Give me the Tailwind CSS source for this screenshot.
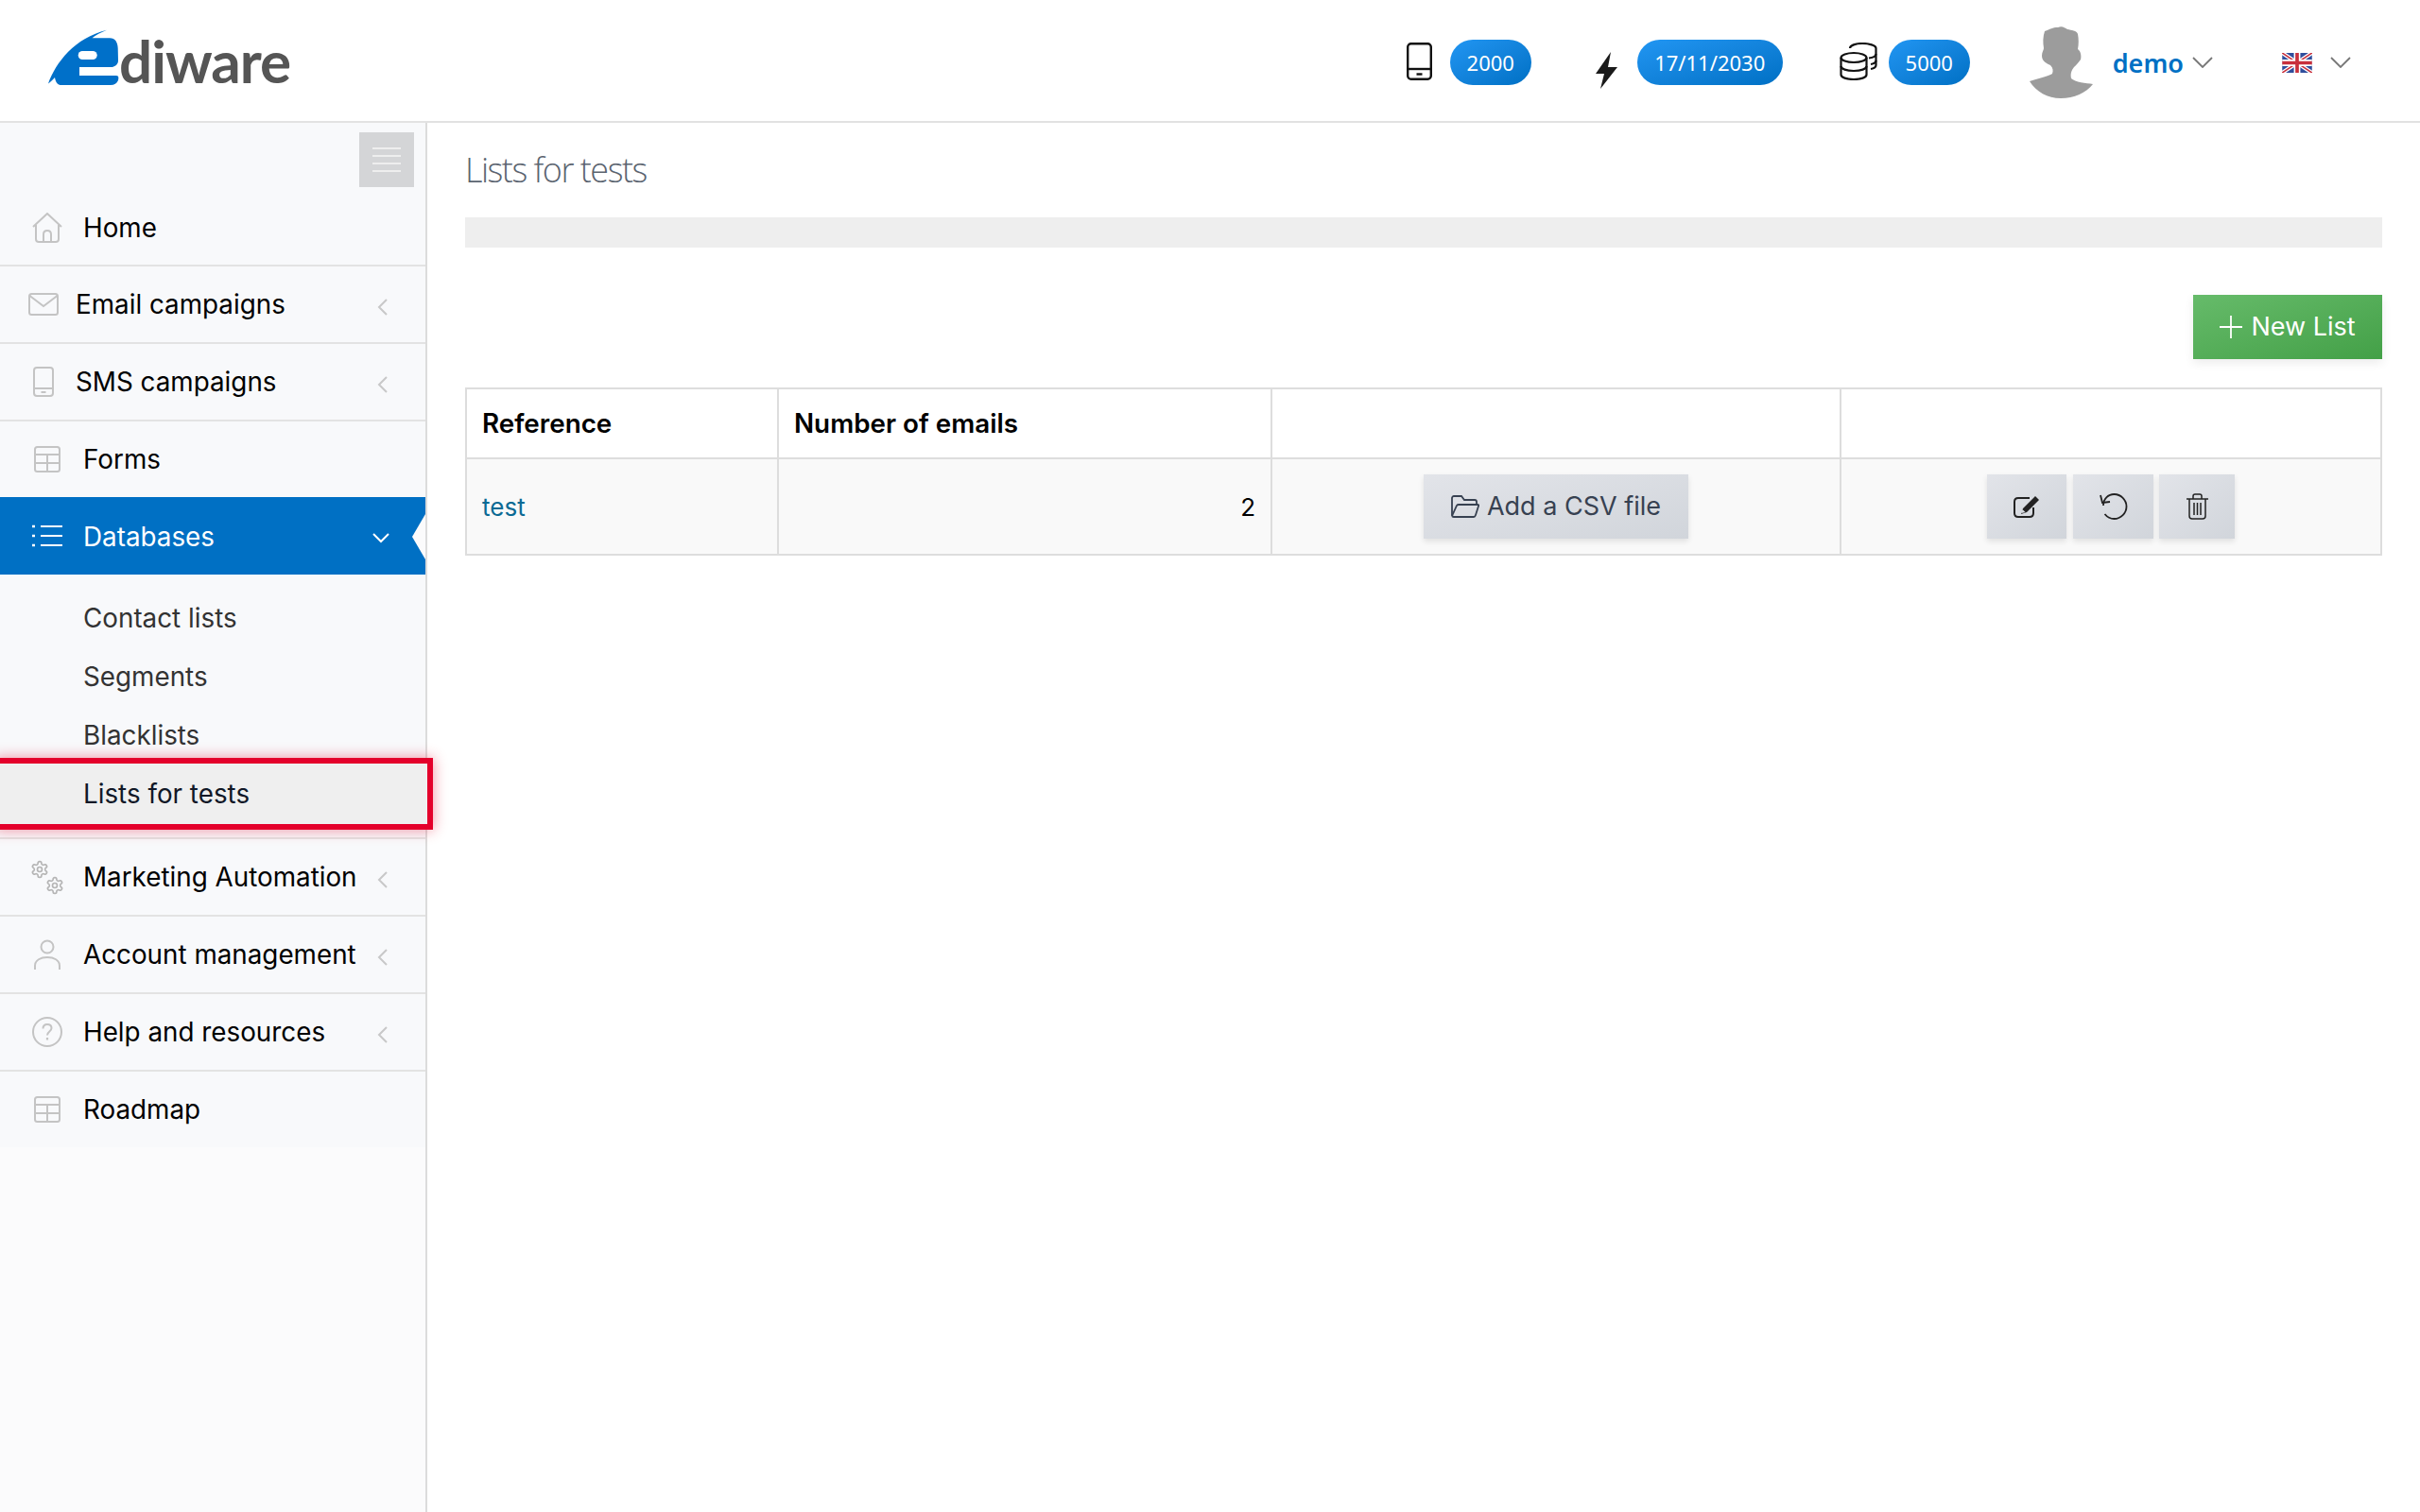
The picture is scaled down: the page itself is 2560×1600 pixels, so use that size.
<!DOCTYPE html>
<html lang="en">
<head>
<meta charset="utf-8">
<title>Lists for tests</title>
<script src="https://cdn.jsdelivr.net/npm/@tailwindcss/browser@4"></script>
</head>
<body class="bg-white font-['Inter',sans-serif]">
<div class="w-[2560px] h-[1600px] overflow-hidden flex flex-col">
  <!-- Header -->
  <header class="h-[130px] shrink-0 border-b-2 border-[#e2e2e2] flex items-center pt-[4px] pl-[51px] pr-[73px] bg-white">
    <div class="flex items-end -mt-[6px]">
      <svg class="w-[78px] h-[62px] -mt-[2px]" viewBox="0 0 78 62">
        <path fill="#0070c9" d="M0 57.5C8 35 28 9 62 .7 56 3.5 50 6 46.5 9.3H65C71 9.3 73.5 14 73.7 20L74 33C74 37 71 39 68 40H33V49H72C75 49 74.5 52 74 54 72.5 57.5 70 59 66 59H14C10 59 8 56.5 7 51 4.5 54 2 56 0 57.5Z"/>
        <rect x="31.7" y="23" width="20" height="9" rx="4.5" fill="#fff"/>
        <rect x="33" y="40.5" width="46" height="8.5" rx="4.2" fill="#fff"/>
      </svg>
      <span class="font-['Lato',sans-serif] font-bold text-[62px] leading-[62px] text-[#555] -ml-[3px] mb-[-2px] tracking-[-1px]">diware</span>
    </div>
    <div class="ml-auto flex items-center">
      <svg class="w-[27px] h-[40px] -mt-[2px]" viewBox="0 0 27 40" fill="none" stroke="#111" stroke-width="2.4"><rect x="1.2" y="1.2" width="24.6" height="37.6" rx="3.5"/><path d="M1.2 28H25.8"/><path d="M10.5 33.5H16.5"/></svg>
      <span class="ml-[19px] w-[86px] h-[48px] rounded-full bg-linear-to-br from-[#2196f3] to-[#0070c4] text-white font-['Noto_Sans',sans-serif] text-[22px] flex items-center justify-center">2000</span>
      <svg class="ml-[68px] w-[23px] h-[39px] mt-[16px]" viewBox="0 0 23 39"><path fill="#1a1a1a" d="M16 0 0 23H9L5 39 23 16H13Z"/></svg>
      <span class="ml-[21px] w-[154px] h-[48px] rounded-full bg-linear-to-br from-[#2196f3] to-[#0070c4] text-white font-['Noto_Sans',sans-serif] text-[22px] flex items-center justify-center">17/11/2030</span>
      <svg class="ml-[60px] w-[40px] h-[40px] -mt-[2px]" viewBox="0 0 40 40" fill="none" stroke="#111" stroke-width="2.2"><ellipse cx="15" cy="16" rx="13.5" ry="5"/><path d="M1.500 16V34C1.500 37 7.500 39 15 39S28.500 37 28.500 34V16"/><path d="M1.500 25C1.500 28 7.500 30 15 30S28.500 28 28.500 25"/><path d="M11 6C11 3 17 1 24 1S38.500 3 38.500 6V24C38.500 26 36 27.500 33 28"/><path d="M38.500 12C38.500 14.500 35 16 31 16.500"/><path d="M38.500 19C38.500 21 36 22.500 33 23"/></svg>
      <span class="ml-[12px] w-[86px] h-[48px] rounded-full bg-linear-to-br from-[#2196f3] to-[#0070c4] text-white font-['Noto_Sans',sans-serif] text-[22px] flex items-center justify-center">5000</span>
      <svg class="ml-[63px] w-[67px] h-[77px] -mt-[2px]" viewBox="0 0 67 77"><path fill="#9c9c9c" d="M16 6C22 4 24 2 30 2 34 0 37 2 40 4 44 5 50 5 51 9 52 14 52 20 51 25 54 27 55 32 54 36 52 39 50 41 47 44 44 48 43 51 44 56 48 60 60 61 67 62 60 71 47 77 33 77 19 77 7 70 0 59 8 56 20 54 24 51 25 48 25 45 22 42 18 40 13 38 13 32 13 28 15 26 15 24 14 18 14 12 16 6Z"/></svg>
      <span class="ml-[21px] font-['Noto_Sans',sans-serif] font-semibold text-[27px] leading-none text-[#0070c4]">demo</span>
      <svg class="ml-[9px] w-[22px] h-[12px]" viewBox="0 0 22 12" fill="none" stroke="#777" stroke-width="1.8"><path d="M1 1 11 11 21 1"/></svg>
      <svg class="ml-[73px] w-[32px] h-[21px]" viewBox="0 0 60 40">
        <rect width="60" height="40" fill="#2f4d9c"/>
        <path d="M0 0 60 40M60 0 0 40" stroke="#fff" stroke-width="8"/>
        <path d="M0 0 60 40M60 0 0 40" stroke="#c8303c" stroke-width="3"/>
        <path d="M30 0V40M0 20H60" stroke="#fff" stroke-width="13"/>
        <path d="M30 0V40M0 20H60" stroke="#c8303c" stroke-width="7"/>
      </svg>
      <svg class="ml-[19px] w-[22px] h-[12px]" viewBox="0 0 22 12" fill="none" stroke="#777" stroke-width="1.8"><path d="M1 1 11 11 21 1"/></svg>
    </div>
  </header>

  <div class="flex flex-1 min-h-0">
    <!-- Sidebar -->
    <aside class="w-[452px] shrink-0 border-r-2 border-[#dcdcdc] bg-[#fbfbfc]">
      <nav class="bg-[#f8f9fb] text-[27.8px] text-black">
        <div class="h-[152px] border-b-2 border-[#e3e3e3] relative flex flex-col">
          <div class="flex justify-end pt-[10px] pr-[12px]">
            <button class="w-[58px] h-[58px] bg-[#d4d5d7] flex flex-col items-center justify-center gap-[6px]">
              <span class="block w-[30px] h-[2px] bg-[#eeeeee]"></span>
              <span class="block w-[30px] h-[2px] bg-[#eeeeee]"></span>
              <span class="block w-[30px] h-[2px] bg-[#eeeeee]"></span>
              <span class="block w-[30px] h-[2px] bg-[#eeeeee]"></span>
            </button>
          </div>
          <div class="flex items-center mt-[21px] pl-[34px]">
            <svg class="w-[32px] h-[32px]" viewBox="0 0 32 32" fill="none" stroke="#c4c4c4" stroke-width="2"><path d="M1 15 16 1 31 15"/><path d="M4 13V28C4 30 5 31 7 31H25C27 31 28 30 28 28V13"/><path d="M12 31V23C12 20 14 19 16 19S20 20 20 23V31"/></svg>
            <span class="ml-[22px] mt-[2px]">Home</span>
          </div>
        </div>

        <div class="h-[82px] border-b-2 border-[#e3e3e3] flex items-center pl-[30px] pr-[40px]">
          <svg class="w-[32px] h-[24px]" viewBox="0 0 32 24" fill="none" stroke="#c4c4c4" stroke-width="2"><rect x="1" y="1" width="30" height="22" rx="2.500"/><path d="M1.500 3 16 14 30.500 3"/></svg>
          <span class="ml-[18px] mt-[2px]">Email campaigns</span>
          <svg class="ml-auto w-[11px] h-[18px] mt-[6px]" viewBox="0 0 11 18" fill="none" stroke="#c8c8c8" stroke-width="2"><path d="M10 1 2 9 10 17"/></svg>
        </div>
        <div class="h-[82px] border-b-2 border-[#e3e3e3] flex items-center pl-[35px] pr-[40px]">
          <svg class="w-[22px] h-[32px]" viewBox="0 0 22 32" fill="none" stroke="#c4c4c4" stroke-width="2"><rect x="1" y="1" width="20" height="30" rx="3"/><path d="M1 23H21"/><path d="M8.500 27H13.500"/></svg>
          <span class="ml-[23px] mt-[2px]">SMS campaigns</span>
          <svg class="ml-auto w-[11px] h-[18px] mt-[6px]" viewBox="0 0 11 18" fill="none" stroke="#c8c8c8" stroke-width="2"><path d="M10 1 2 9 10 17"/></svg>
        </div>
        <div class="h-[80px] flex items-center pl-[36px] pr-[40px]">
          <svg class="w-[28px] h-[28px]" viewBox="0 0 28 28" fill="none" stroke="#c4c4c4" stroke-width="2"><rect x="1" y="1" width="26" height="26" rx="2.500"/><path d="M1 9H27M1 18H27M14 9V27"/></svg>
          <span class="ml-[24px] mt-[2px]">Forms</span>
        </div>
        <div class="relative h-[82px] bg-[#0070c4] text-white flex items-center pl-[34px] pr-[38px] w-[450px]">
          <svg class="w-[32px] h-[24px]" viewBox="0 0 32 24" fill="none" stroke="#fff" stroke-width="1.800"><path d="M9 2H32M9 12H32M9 22H32"/><path d="M0 2H3M0 12H3M0 22H3" stroke-width="2.500"/></svg>
          <span class="ml-[22px] mt-[3px]">Databases</span>
          <svg class="ml-auto w-[18px] h-[11px] mt-[4px]" viewBox="0 0 18 11" fill="none" stroke="#fff" stroke-width="2"><path d="M1 1 9 9 17 1"/></svg>
          <span class="absolute right-0 top-[18px] w-0 h-0 border-y-[24px] border-y-transparent border-r-[14px] border-r-[#fbfbfc]"></span>
        </div>

        <ul class="pt-[15px] pb-[15px] border-b-2 border-[#e3e3e3] text-[#333]">
          <li class="h-[62px] flex items-center pl-[88px] pt-[2px]">Contact lists</li>
          <li class="h-[62px] flex items-center pl-[88px] pt-[2px]">Segments</li>
          <li class="h-[62px] flex items-center pl-[88px] pt-[2px]">Blacklists</li>
          <li class="relative h-[62px] flex items-center pl-[88px] pt-[2px] text-[#111827]">
            <span class="absolute -left-[6px] -right-[8px] -top-[7px] -bottom-[7px] bg-[#efefef] border-[6px] border-[#e4002b] shadow-[0_0_14px_rgba(228,0,43,0.45)]"></span>
            <span class="relative">Lists for tests</span>
          </li>
        </ul>

        <div class="h-[82px] border-b-2 border-[#e3e3e3] flex items-center pl-[32px] pr-[40px]">
          <svg class="w-[36px] h-[37px]" viewBox="0 0 36 37" fill="none" stroke="#b5b5b5">
            <svg x="0" y="0" width="20" height="20" viewBox="0 0 24 24" stroke-width="2"><path d="M12.220 2h-.44a2 2 0 0 0-2 2v.18a2 2 0 0 1-1 1.730l-.43.25a2 2 0 0 1-2 0l-.15-.08a2 2 0 0 0-2.730.73l-.22.38a2 2 0 0 0 .73 2.730l.15.1a2 2 0 0 1 1 1.720v.51a2 2 0 0 1-1 1.740l-.15.09a2 2 0 0 0-.73 2.730l.22.38a2 2 0 0 0 2.730.73l.15-.08a2 2 0 0 1 2 0l.43.25a2 2 0 0 1 1 1.730V20a2 2 0 0 0 2 2h.44a2 2 0 0 0 2-2v-.18a2 2 0 0 1 1-1.730l.43-.25a2 2 0 0 1 2 0l.15.08a2 2 0 0 0 2.730-.73l.22-.39a2 2 0 0 0-.73-2.730l-.15-.08a2 2 0 0 1-1-1.740v-.5a2 2 0 0 1 1-1.740l.15-.09a2 2 0 0 0 .73-2.730l-.22-.38a2 2 0 0 0-2.730-.73l-.15.08a2 2 0 0 1-2 0l-.43-.25a2 2 0 0 1-1-1.730V4a2 2 0 0 0-2-2z"/><circle cx="12" cy="12" r="3"/></svg>
            <svg x="16" y="17" width="20" height="20" viewBox="0 0 24 24" stroke-width="2"><path d="M12.220 2h-.44a2 2 0 0 0-2 2v.18a2 2 0 0 1-1 1.730l-.43.25a2 2 0 0 1-2 0l-.15-.08a2 2 0 0 0-2.730.73l-.22.38a2 2 0 0 0 .73 2.730l.15.1a2 2 0 0 1 1 1.720v.51a2 2 0 0 1-1 1.740l-.15.09a2 2 0 0 0-.73 2.730l.22.38a2 2 0 0 0 2.730.73l.15-.08a2 2 0 0 1 2 0l.43.25a2 2 0 0 1 1 1.730V20a2 2 0 0 0 2 2h.44a2 2 0 0 0 2-2v-.18a2 2 0 0 1 1-1.730l.43-.25a2 2 0 0 1 2 0l.15.08a2 2 0 0 0 2.730-.73l.22-.39a2 2 0 0 0-.73-2.730l-.15-.08a2 2 0 0 1-1-1.740v-.5a2 2 0 0 1 1-1.740l.15-.09a2 2 0 0 0 .73-2.730l-.22-.38a2 2 0 0 0-2.730-.73l-.15.08a2 2 0 0 1-2 0l-.43-.25a2 2 0 0 1-1-1.730V4a2 2 0 0 0-2-2z"/><circle cx="12" cy="12" r="3"/></svg>
          </svg>
          <span class="ml-[20px] mt-[2px] whitespace-nowrap">Marketing Automation</span>
          <svg class="ml-auto w-[11px] h-[18px] mt-[6px]" viewBox="0 0 11 18" fill="none" stroke="#c8c8c8" stroke-width="2"><path d="M10 1 2 9 10 17"/></svg>
        </div>
        <div class="h-[82px] border-b-2 border-[#e3e3e3] flex items-center pl-[36px] pr-[40px]">
          <svg class="w-[28px] h-[32px]" viewBox="0 0 28 32" fill="none" stroke="#c4c4c4" stroke-width="2"><circle cx="14" cy="8" r="6.500"/><path d="M1 32V28C1 22 7 19 14 19S27 22 27 28V32"/></svg>
          <span class="ml-[24px] mt-[2px] whitespace-nowrap">Account management</span>
          <svg class="ml-auto w-[11px] h-[18px] mt-[6px]" viewBox="0 0 11 18" fill="none" stroke="#c8c8c8" stroke-width="2"><path d="M10 1 2 9 10 17"/></svg>
        </div>
        <div class="h-[82px] border-b-2 border-[#e3e3e3] flex items-center pl-[34px] pr-[40px]">
          <svg class="w-[32px] h-[32px]" viewBox="0 0 32 32" fill="none" stroke="#c4c4c4" stroke-width="2"><circle cx="16" cy="16" r="15"/><path d="M11.500 12.500C11.500 9.500 13.500 8 16 8S20.500 9.500 20.500 12C20.500 15.500 16 15.500 16 19.500"/><path d="M16 22V24.500" stroke-width="2.200"/></svg>
          <span class="ml-[22px] mt-[2px]">Help and resources</span>
          <svg class="ml-auto w-[11px] h-[18px] mt-[6px]" viewBox="0 0 11 18" fill="none" stroke="#c8c8c8" stroke-width="2"><path d="M10 1 2 9 10 17"/></svg>
        </div>
        <div class="h-[80px] flex items-center pl-[36px] pr-[40px]">
          <svg class="w-[28px] h-[28px]" viewBox="0 0 28 28" fill="none" stroke="#c4c4c4" stroke-width="2"><rect x="1" y="1" width="26" height="26" rx="2.500"/><path d="M1 9H27M1 18H27M14 9V27"/></svg>
          <span class="ml-[24px] mt-[2px]">Roadmap</span>
        </div>
      </nav>
    </aside>

    <!-- Main -->
    <main class="flex-1 min-w-0 pl-[40px] pr-[40px] bg-white">
      <h1 class="h-[100px] flex items-center font-['Open_Sans',sans-serif] font-light text-[36px] tracking-[-1.5px] text-[#5b6470]">Lists for tests</h1>
      <div class="h-[32px] bg-[#eeeeee]"></div>
      <div class="flex justify-end mt-[50px]">
        <button class="w-[200px] h-[68px] bg-linear-to-br from-[#66bb6a] to-[#43a047] text-white text-[27px] shadow-[0_4px_10px_rgba(0,0,0,0.08)] flex items-center justify-center">
          <svg class="w-[24px] h-[24px] mr-[9px]" viewBox="0 0 24 24" fill="none" stroke="#fff" stroke-width="1.800"><path d="M12 0V24M0 12H24"/></svg>
          <span class="mt-[1px]">New List</span>
        </button>
      </div>
      <table class="mt-[30px] w-[2026px] table-fixed border-collapse text-[27.8px] text-black">
        <colgroup>
          <col class="w-[330px]"><col class="w-[522px]"><col class="w-[602px]"><col class="w-[572px]">
        </colgroup>
        <thead>
          <tr class="h-[74px] bg-white">
            <th class="border-2 border-[#dddddd] px-[16px] pt-[2px] text-left font-semibold">Reference</th>
            <th class="border-2 border-[#dddddd] px-[16px] pt-[2px] text-left font-semibold">Number of emails</th>
            <th class="border-2 border-[#dddddd]"></th>
            <th class="border-2 border-[#dddddd]"></th>
          </tr>
        </thead>
        <tbody>
          <tr class="h-[102px] bg-[#f9f9f9]">
            <td class="border-2 border-[#dddddd] px-[16px] text-[26px] text-[#0b6a94]">test</td>
            <td class="border-2 border-[#dddddd] px-[16px] text-[26px] text-right">2</td>
            <td class="border-2 border-[#dddddd]">
              <div class="flex justify-center">
                <button class="w-[280px] h-[68px] bg-linear-to-br from-[#e2e4e9] to-[#d1d5db] text-[27px] text-[#374151] shadow-[0_3px_6px_rgba(0,0,0,0.1)] flex items-center justify-center">
                  <svg class="w-[30px] h-[24px] mr-[8px]" viewBox="0 0 30 24" fill="none" stroke="#374151" stroke-width="1.800"><path d="M1 21V3C1 2 2 1 3 1H11L14 5H25C26 5 27 6 27 7V10"/><path d="M1 22 6 11C6.500 10.300 7 10 8 10H28C29 10 29.500 10.500 29 11.500L26 21C25.500 22.500 25 23 24 23H3C1.500 23 1 22.500 1 21Z"/></svg>
                  <span class="mt-[1px]">Add a CSV file</span>
                </button>
              </div>
            </td>
            <td class="border-2 border-[#dddddd]">
              <div class="flex justify-center">
                <button class="w-[84px] h-[68px] bg-linear-to-br from-[#e2e4e9] to-[#d1d5db] shadow-[0_3px_6px_rgba(0,0,0,0.1)] flex items-center justify-center">
                  <svg class="w-[28px] h-[24px]" viewBox="0 0 28 24" fill="none" stroke="#222" stroke-width="2"><path d="M17 3H5C2.500 3 1 4.500 1 7V19C1 21.500 2.500 23 5 23H17C19.500 23 21 21.500 21 19V13"/><path fill="#222" stroke="none" d="M23 1 27 5 14 18 8 20 10 14ZM9.500 15 8.500 19 12.500 18Z"/></svg>
                </button>
                <button class="ml-[7px] w-[85px] h-[68px] bg-linear-to-br from-[#e2e4e9] to-[#d1d5db] shadow-[0_3px_6px_rgba(0,0,0,0.1)] flex items-center justify-center">
                  <svg class="w-[30px] h-[30px]" viewBox="0 0 30 30" fill="none" stroke="#222" stroke-width="1.800"><path d="M4 14C4 7 9 2 15.500 2 22.500 2 28.500 8 28.500 15S22.500 28 15.500 28C11.500 28 8 26 5.500 23"/><path d="M1 3 3 11 11 10"/></svg>
                </button>
                <button class="ml-[6px] w-[80px] h-[68px] bg-linear-to-br from-[#e2e4e9] to-[#d1d5db] shadow-[0_3px_6px_rgba(0,0,0,0.1)] flex items-center justify-center">
                  <svg class="w-[23px] h-[28px]" viewBox="0 0 23 28" fill="none" stroke="#222" stroke-width="1.500"><path d="M0 6H23"/><path d="M7 6V3C7 2 8 1 9 1H14C15 1 16 2 16 3V6"/><path d="M3 6V24C3 26 4 27 6 27H17C19 27 20 26 20 24V6"/><path d="M8 10V23M11.500 10V23M15 10V23"/></svg>
                </button>
              </div>
            </td>
          </tr>
        </tbody>
      </table>
    </main>
  </div>
</div>
</body>
</html>
